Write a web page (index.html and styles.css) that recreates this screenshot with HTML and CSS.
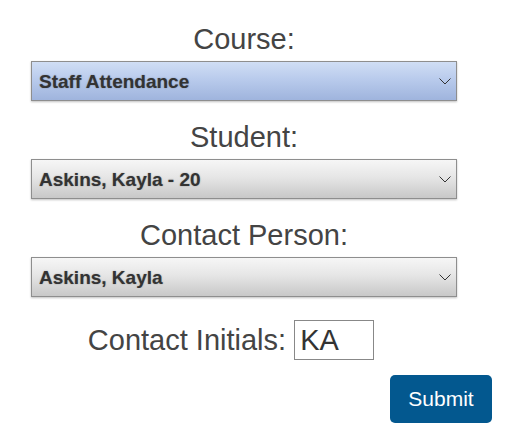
FILE: index.html
```html
<!DOCTYPE html>
<html>
<head>
<meta charset="utf-8">
<link rel="stylesheet" href="styles.css">
</head>
<body>
<form class="form">
  <div class="fields">
    <div class="field">
      <label class="label">Course:</label>
      <div class="select-wrap">
        <select class="select select-active"><option>Staff Attendance</option></select>
        <svg class="chevron" width="12" height="7" viewBox="0 0 12 7"><path d="M0.5 0.5 L6 6 L11.5 0.5" fill="none" stroke="#333" stroke-width="1"/></svg>
      </div>
    </div>
    <div class="field">
      <label class="label">Student:</label>
      <div class="select-wrap">
        <select class="select"><option>Askins, Kayla - 20</option></select>
        <svg class="chevron" width="12" height="7" viewBox="0 0 12 7"><path d="M0.5 0.5 L6 6 L11.5 0.5" fill="none" stroke="#333" stroke-width="1"/></svg>
      </div>
    </div>
    <div class="field">
      <label class="label">Contact Person:</label>
      <div class="select-wrap">
        <select class="select"><option>Askins, Kayla</option></select>
        <svg class="chevron" width="12" height="7" viewBox="0 0 12 7"><path d="M0.5 0.5 L6 6 L11.5 0.5" fill="none" stroke="#333" stroke-width="1"/></svg>
      </div>
    </div>
    <div class="initials-row">
      <label class="label">Contact Initials:</label>
      <input class="initials" type="text" value="KA">
    </div>
  </div>
  <div class="actions">
    <button class="submit" type="button">Submit</button>
  </div>
</form>
</body>
</html>
```
FILE: styles.css
```css
html, body {
  margin: 0;
  padding: 0;
  background: #fff;
}
body {
  font-family: "Liberation Sans", Arial, sans-serif;
  color: #444;
}
.form {
  padding: 23px 0 0 31px;
  width: 461px;
}
.fields {
  width: 426px;
  display: flex;
  flex-direction: column;
}
.field {
  display: flex;
  flex-direction: column;
  margin-bottom: 20px;
}
.label {
  font-size: 29px;
  line-height: 32px;
  text-align: center;
  color: #444;
  margin-bottom: 6px;
}
.select-wrap {
  position: relative;
  height: 40px;
}
.select {
  -webkit-appearance: none;
  appearance: none;
  width: 100%;
  height: 40px;
  box-sizing: border-box;
  margin: 0;
  padding: 0 30px 0 7px;
  border: 1px solid #8e8e8e;
  border-radius: 0;
  font-family: "Liberation Sans", Arial, sans-serif;
  font-size: 19px;
  font-weight: bold;
  color: #333;
  text-shadow: 0 0 1.5px rgba(0,0,0,0.35);
  background: linear-gradient(#f6f6f6, #e6e6e6 45%, #c8c8c8);
  box-shadow: 0 1px 2px rgba(0,0,0,0.25);
}
.select-active {
  background: linear-gradient(#d0def5, #b9cbec 45%, #9fb4dd);
}
.chevron {
  position: absolute;
  right: 6px;
  top: 17px;
}
.initials-row {
  display: flex;
  justify-content: center;
  align-items: center;
  padding-right: 26px;
  margin-top: 3px;
}
.initials-row .label {
  margin: 0 8px 0 0;
}
.initials {
  width: 80px;
  height: 40px;
  box-sizing: border-box;
  border: 1px solid #888;
  padding: 0 5px;
  margin: 0;
  font-family: "Liberation Sans", Arial, sans-serif;
  font-size: 29px;
  color: #333;
  outline: none;
}
.actions {
  display: flex;
  justify-content: flex-end;
  margin-top: 15px;
}
.submit {
  width: 102px;
  height: 48px;
  border: none;
  border-radius: 5px;
  background: #03588f;
  color: #fff;
  font-family: "Liberation Sans", Arial, sans-serif;
  font-size: 21px;
  padding: 0;
}
```
